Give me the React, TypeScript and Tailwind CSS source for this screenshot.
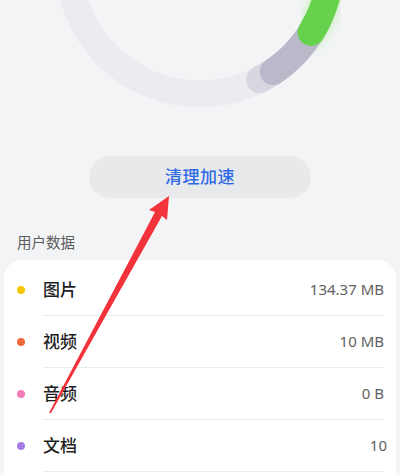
import React from "react"

const rows = [
  { name: "图片", value: "134.37 MB", dot: "bg-[#f6c700]" },
  { name: "视频", value: "10 MB", dot: "bg-[#f26a3b]" },
  { name: "音频", value: "0 B", dot: "bg-[#f27db8]" },
  { name: "文档", value: "10", dot: "bg-[#a67ce9]" },
]

function Ring() {
  return (
    <svg width="400" height="120" viewBox="0 0 400 120" className="block">
      <defs>
        <filter id="glow" x="-50%" y="-50%" width="200%" height="200%">
          <feGaussianBlur stdDeviation="5" />
        </filter>
      </defs>
      <circle cx="200" cy="-37" r="131" fill="none" stroke="#ebecef" strokeWidth="27" />
      <path d="M323.1 -81.8 A131 131 0 0 1 311.1 32.4" fill="none" stroke="#7ee05f" strokeOpacity="0.35" strokeWidth="30" strokeLinecap="round" filter="url(#glow)" />
      <path d="M284.2 63.4 A131 131 0 0 1 259.5 79.7" fill="none" stroke="#d7d7e1" strokeWidth="27" strokeLinecap="round" />
      <path d="M318.7 18.4 A131 131 0 0 1 273.3 71.6" fill="none" stroke="#bab9ca" strokeWidth="27" strokeLinecap="round" />
      <path d="M323.1 -81.8 A131 131 0 0 1 311.1 32.4" fill="none" stroke="#66d14a" strokeWidth="27" strokeLinecap="round" />
    </svg>
  )
}

export default function App() {
  return (
    <div
      className="relative w-[400px] h-[475px] overflow-hidden bg-[#f3f4f6]"
      style={{ fontFamily: '"Noto Sans", "Noto Sans CJK SC", sans-serif' }}
    >
      <Ring />

      <div className="mt-[36px] mx-auto w-[222px] h-[42px] rounded-full bg-[#e8e9eb] flex items-center justify-center">
        <span className="text-[17px] font-medium text-[#2f6ae6] tracking-[0.5px]">清理加速</span>
      </div>

      <div className="mt-[34px] px-[17px] h-[20px] leading-[20px] text-[14.5px] text-[#5c5c5c]">用户数据</div>

      <div className="mt-[8px] mx-[4px] rounded-[18px] bg-white pt-[4px] pb-[40px]">
        {rows.map((r) => (
          <div key={r.name} className="flex items-center h-[52px]">
            <div className="w-[39px] pl-[13px] flex items-center">
              <span className={`w-[8px] h-[8px] rounded-full ${r.dot}`} />
            </div>
            <div className="flex-1 mr-[12px] h-full flex items-center justify-between border-b border-[#ececec]">
              <span className="text-[17px] font-medium text-[#1f1f1f]">{r.name}</span>
              <span className={`text-[15px] text-[#616161] ${r.value === "10" ? "-mr-[3px]" : ""}`}>{r.value}</span>
            </div>
          </div>
        ))}
      </div>

      <svg className="absolute inset-0 pointer-events-none" width="400" height="475" viewBox="0 0 400 475">
        <polygon
          points="169,196 149,210 155,212 49,413 51,413 162,216 167,220"
          fill="#f3333b"
        />
      </svg>
    </div>
  )
}
